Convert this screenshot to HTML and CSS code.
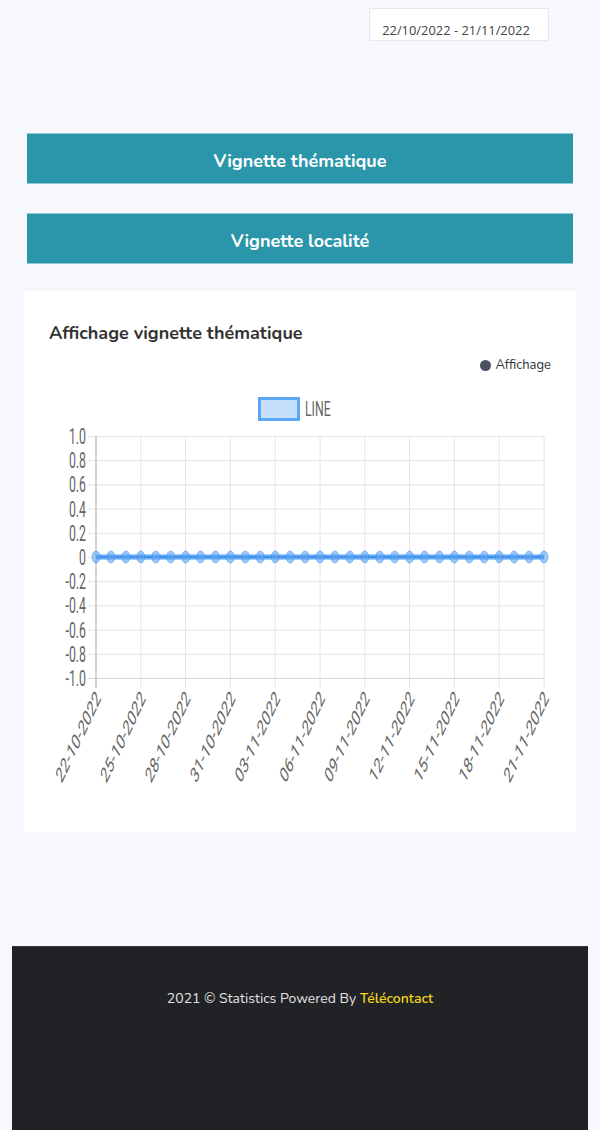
FILE: index.html
```html
<!DOCTYPE html>
<html lang="fr">
<head>
<meta charset="utf-8">
<title>Statistics</title>
<link rel="stylesheet" href="styles.css">
</head>
<body>
<header class="topbar">
  <div class="daterange">22/10/2022 - 21/11/2022</div>
</header>
<main class="content">
  <div class="actions">
    <button class="btn">Vignette thématique</button>
    <button class="btn">Vignette localité</button>
  </div>
  <section class="card">
    <h2 class="card-title">Affichage vignette thématique</h2>
    <div class="legend"><span class="dot"></span><span>Affichage</span></div>
    <svg class="chart" width="552" height="410" viewBox="0 0 552 410">
      <g class="legend-line">
        <rect x="235.5" y="13.5" width="39" height="21" fill="#c6e0fc" stroke="#5ba6f6" stroke-width="3"/>
        <text transform="translate(281,24) scale(0.63,1)" font-size="19.5" dominant-baseline="central" fill="#666">LINE</text>
      </g>
      <g class="grid" stroke="#e4e4e4" stroke-width="1">
        <line x1="64" y1="51.5" x2="520" y2="51.5"/>
        <line x1="64" y1="75.7" x2="520" y2="75.7"/>
        <line x1="64" y1="99.9" x2="520" y2="99.9"/>
        <line x1="64" y1="124.1" x2="520" y2="124.1"/>
        <line x1="64" y1="148.3" x2="520" y2="148.3"/>
        <line x1="64" y1="172.5" x2="520" y2="172.5"/>
        <line x1="64" y1="196.7" x2="520" y2="196.7"/>
        <line x1="64" y1="220.9" x2="520" y2="220.9"/>
        <line x1="64" y1="245.1" x2="520" y2="245.1"/>
        <line x1="64" y1="269.3" x2="520" y2="269.3"/>
        <line x1="64" y1="293.5" x2="520" y2="293.5" stroke="#d6d6d6"/>
        <line x1="116.8" y1="51" x2="116.8" y2="303"/>
        <line x1="161.6" y1="51" x2="161.6" y2="303"/>
        <line x1="206.4" y1="51" x2="206.4" y2="303"/>
        <line x1="251.2" y1="51" x2="251.2" y2="303"/>
        <line x1="296" y1="51" x2="296" y2="303"/>
        <line x1="340.8" y1="51" x2="340.8" y2="303"/>
        <line x1="385.6" y1="51" x2="385.6" y2="303"/>
        <line x1="430.4" y1="51" x2="430.4" y2="303"/>
        <line x1="475.2" y1="51" x2="475.2" y2="303"/>
        <line x1="520" y1="51" x2="520" y2="303"/>
        <line x1="72" y1="51" x2="72" y2="303" stroke="#a9a9a9"/>
      </g>
      <g class="ylabels" fill="#666" font-size="22" text-anchor="end" dominant-baseline="central">
        <text transform="translate(62,51) scale(0.56,1)">1.0</text>
        <text transform="translate(62,75.2) scale(0.56,1)">0.8</text>
        <text transform="translate(62,99.4) scale(0.56,1)">0.6</text>
        <text transform="translate(62,123.6) scale(0.56,1)">0.4</text>
        <text transform="translate(62,147.8) scale(0.56,1)">0.2</text>
        <text transform="translate(62,172) scale(0.56,1)">0</text>
        <text transform="translate(62,196.2) scale(0.56,1)">-0.2</text>
        <text transform="translate(62,220.4) scale(0.56,1)">-0.4</text>
        <text transform="translate(62,244.6) scale(0.56,1)">-0.6</text>
        <text transform="translate(62,268.8) scale(0.56,1)">-0.8</text>
        <text transform="translate(62,293) scale(0.56,1)">-1.0</text>
      </g>
      <g class="series">
        <line x1="72" y1="172" x2="520" y2="172" stroke="#a6cdf8" stroke-width="6"/>
        <line x1="72" y1="172" x2="520" y2="172" stroke="#3f91f0" stroke-width="3"/>
        <g fill="rgba(92,163,245,0.6)" stroke="rgba(70,148,240,0.55)" stroke-width="1">
          <ellipse cx="72" cy="172" rx="4" ry="6"/>
          <ellipse cx="86.93" cy="172" rx="4" ry="6"/>
          <ellipse cx="101.87" cy="172" rx="4" ry="6"/>
          <ellipse cx="116.8" cy="172" rx="4" ry="6"/>
          <ellipse cx="131.73" cy="172" rx="4" ry="6"/>
          <ellipse cx="146.67" cy="172" rx="4" ry="6"/>
          <ellipse cx="161.6" cy="172" rx="4" ry="6"/>
          <ellipse cx="176.53" cy="172" rx="4" ry="6"/>
          <ellipse cx="191.47" cy="172" rx="4" ry="6"/>
          <ellipse cx="206.4" cy="172" rx="4" ry="6"/>
          <ellipse cx="221.33" cy="172" rx="4" ry="6"/>
          <ellipse cx="236.27" cy="172" rx="4" ry="6"/>
          <ellipse cx="251.2" cy="172" rx="4" ry="6"/>
          <ellipse cx="266.13" cy="172" rx="4" ry="6"/>
          <ellipse cx="281.07" cy="172" rx="4" ry="6"/>
          <ellipse cx="296" cy="172" rx="4" ry="6"/>
          <ellipse cx="310.93" cy="172" rx="4" ry="6"/>
          <ellipse cx="325.87" cy="172" rx="4" ry="6"/>
          <ellipse cx="340.8" cy="172" rx="4" ry="6"/>
          <ellipse cx="355.73" cy="172" rx="4" ry="6"/>
          <ellipse cx="370.67" cy="172" rx="4" ry="6"/>
          <ellipse cx="385.6" cy="172" rx="4" ry="6"/>
          <ellipse cx="400.53" cy="172" rx="4" ry="6"/>
          <ellipse cx="415.47" cy="172" rx="4" ry="6"/>
          <ellipse cx="430.4" cy="172" rx="4" ry="6"/>
          <ellipse cx="445.33" cy="172" rx="4" ry="6"/>
          <ellipse cx="460.27" cy="172" rx="4" ry="6"/>
          <ellipse cx="475.2" cy="172" rx="4" ry="6"/>
          <ellipse cx="490.13" cy="172" rx="4" ry="6"/>
          <ellipse cx="505.07" cy="172" rx="4" ry="6"/>
          <ellipse cx="520" cy="172" rx="4" ry="6"/>
        </g>
      </g>
      <g class="xlabels" fill="#666" font-size="22" text-anchor="end" dominant-baseline="central">
        <text transform="translate(74,309) scale(0.56,1) rotate(-50)">22-10-2022</text>
        <text transform="translate(118.8,309) scale(0.56,1) rotate(-50)">25-10-2022</text>
        <text transform="translate(163.6,309) scale(0.56,1) rotate(-50)">28-10-2022</text>
        <text transform="translate(208.4,309) scale(0.56,1) rotate(-50)">31-10-2022</text>
        <text transform="translate(253.2,309) scale(0.56,1) rotate(-50)">03-11-2022</text>
        <text transform="translate(298,309) scale(0.56,1) rotate(-50)">06-11-2022</text>
        <text transform="translate(342.8,309) scale(0.56,1) rotate(-50)">09-11-2022</text>
        <text transform="translate(387.6,309) scale(0.56,1) rotate(-50)">12-11-2022</text>
        <text transform="translate(432.4,309) scale(0.56,1) rotate(-50)">15-11-2022</text>
        <text transform="translate(477.2,309) scale(0.56,1) rotate(-50)">18-11-2022</text>
        <text transform="translate(522,309) scale(0.56,1) rotate(-50)">21-11-2022</text>
      </g>
    </svg>
  </section>
</main>
<footer class="footer">
  <p class="footer-text">2021 © Statistics Powered By <a class="brand" href="#">Télécontact</a></p>
</footer>
</body>
</html>
```

FILE: styles.css
```css
html, body {
  margin: 0;
  background: #f7f8fd;
}

body {
  padding: 8px 12px 0;
  font-family: "Nunito", "Lato", "Noto Sans", sans-serif;
  color: #333;
}

.topbar {
  display: flex;
  justify-content: flex-end;
  padding-right: 39px;
}

.daterange {
  box-sizing: border-box;
  width: 180px;
  height: 33px;
  background: #fff;
  border: 1px solid #e6e8ee;
  display: flex;
  align-items: flex-end;
  justify-content: center;
  padding: 0 6px 1px 0;
  font-family: "Open Sans", "Noto Sans", sans-serif;
  font-size: 12.9px;
  line-height: 18px;
  color: #444;
}

.actions {
  margin-top: 92px;
  padding: 0 15px;
  display: flex;
  flex-direction: column;
  gap: 29px;
}

.btn {
  box-sizing: border-box;
  height: 51px;
  width: 100%;
  background: #2b96aa;
  color: #fff;
  border: 0;
  border-top: 1px solid #8ecad5;
  border-bottom: 1px solid #8ecad5;
  font-family: inherit;
  font-size: 18px;
  font-weight: 700;
  padding: 4px 0 0;
}

.card {
  margin: 27px 12px 0;
  background: #fff;
  padding: 30px 0 37px;
}

.card-title {
  margin: 0 25px;
  font-size: 18px;
  line-height: 24px;
  font-weight: 700;
  color: #333;
}

.legend {
  margin-top: 12px;
  padding-right: 25px;
  display: flex;
  justify-content: flex-end;
  align-items: center;
  gap: 4px;
  font-size: 13px;
  line-height: 16px;
  color: #333;
}

.dot {
  width: 11px;
  height: 11px;
  border-radius: 50%;
  background: #4a5163;
}

.chart {
  display: block;
  margin-top: 12px;
  font-family: "Roboto", "Liberation Sans", sans-serif;
}

.footer {
  margin-top: 114px;
  min-height: 190px;
  background: #212226;
  border-top: 1px solid #3b3c41;
  padding-top: 43px;
  box-sizing: border-box;
}

.footer-text {
  margin: 0;
  text-align: center;
  font-size: 14px;
  line-height: 18px;
  color: #e2e2e2;
}

.brand {
  color: #f4d41c;
  font-weight: 600;
  text-decoration: none;
}
```
